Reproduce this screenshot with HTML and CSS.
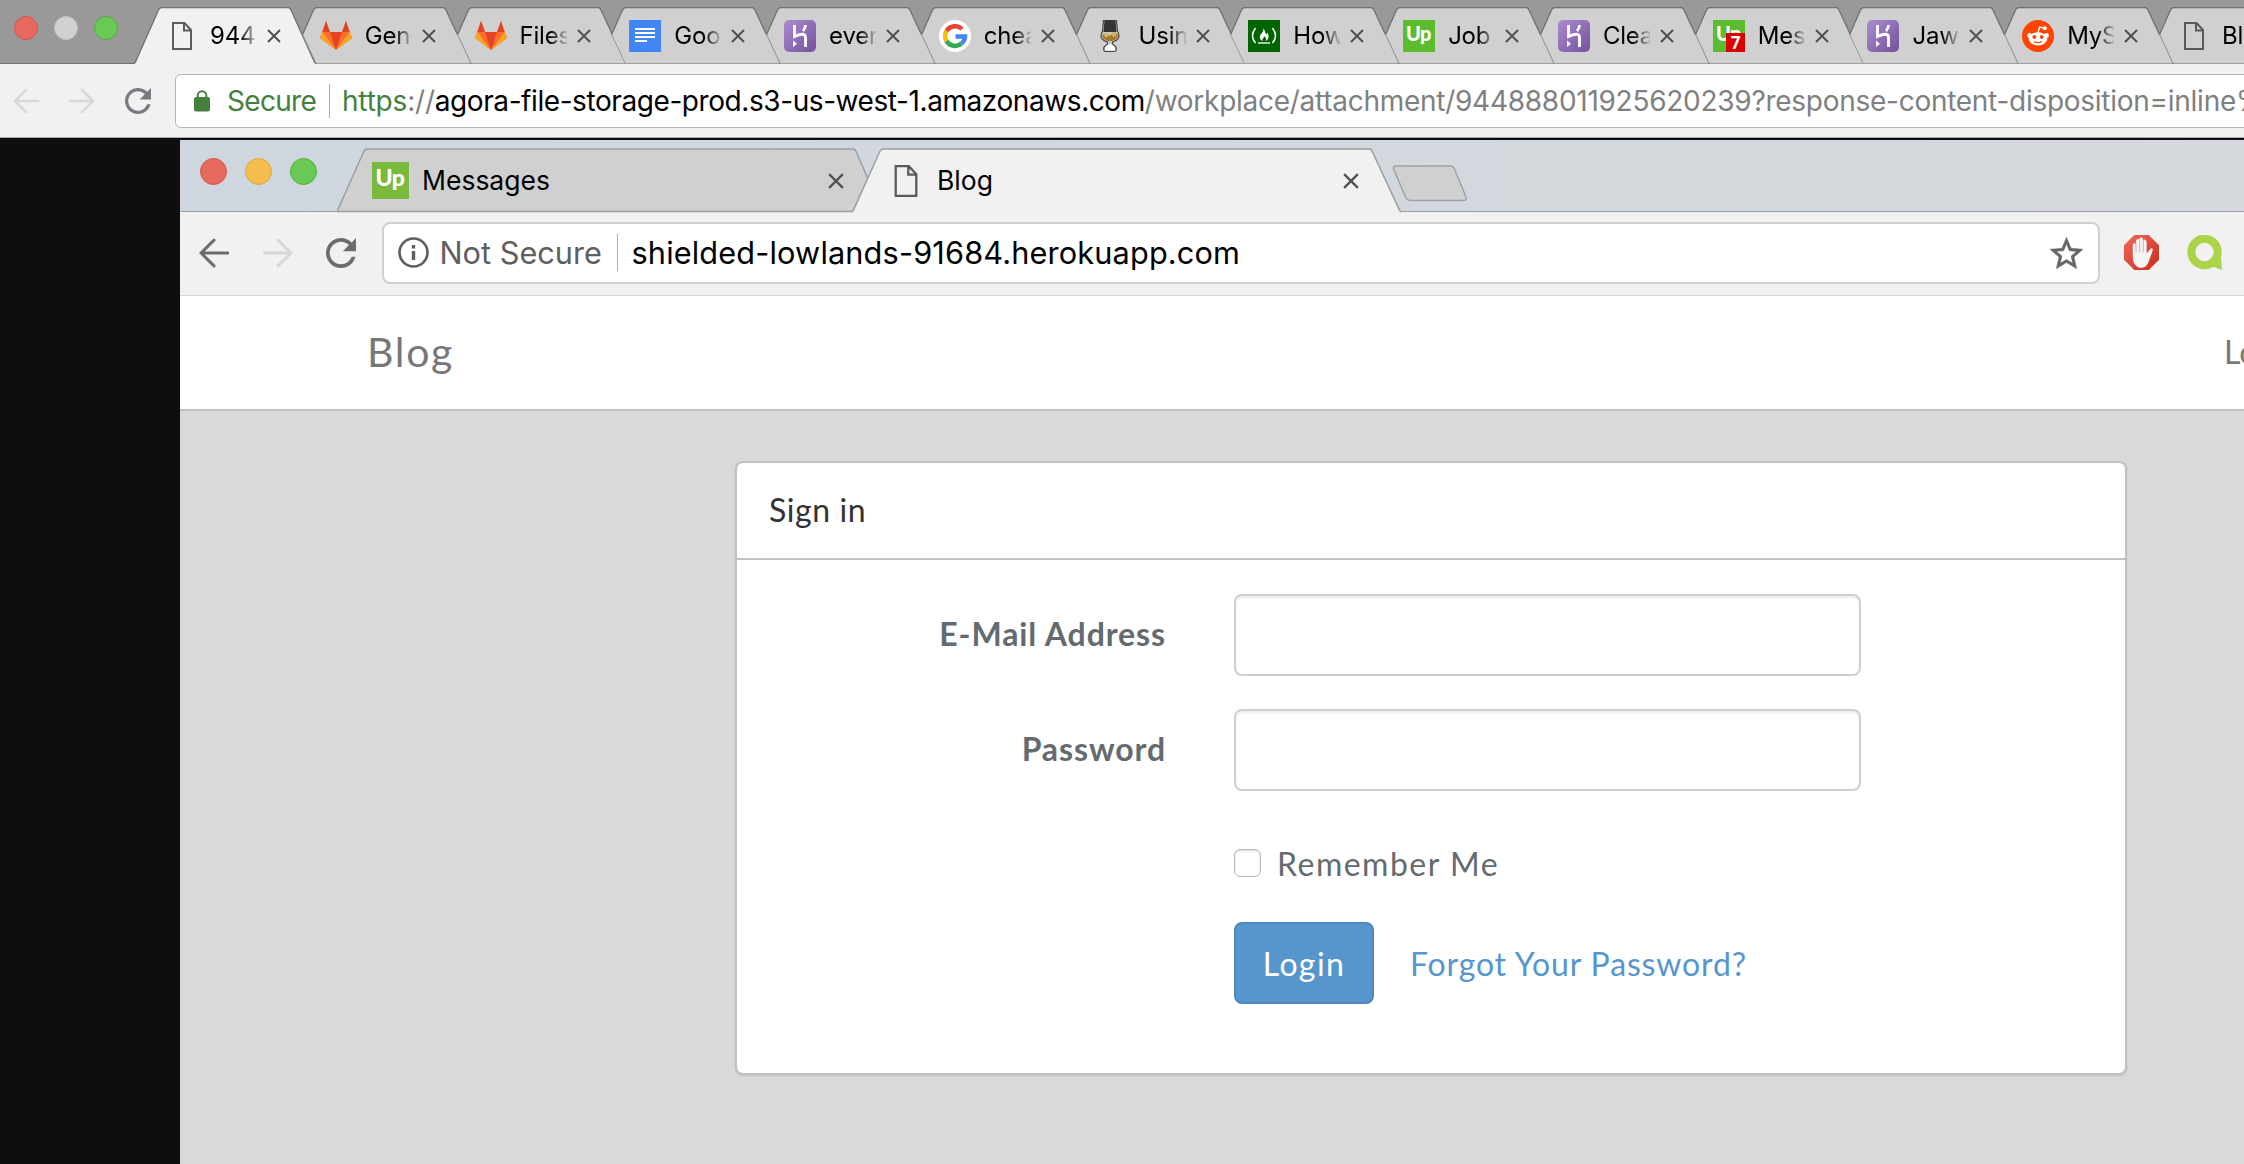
FILE: index.html
```
<!DOCTYPE html>
<html lang="en">
<head>
    <meta charset="UTF-8">
    <meta name="viewport" content="width=device-width, initial-scale=1.0">
    <title>Blog</title>
    <link rel="stylesheet" href="styles.css">
</head>
<body>
    <!-- shared icons -->
    <svg class="sprite">
        <defs>
            <linearGradient id="purple" x1="0" y1="0" x2="1" y2="1">
                <stop offset="0" stop-color="#ab8cd0"/>
                <stop offset="1" stop-color="#75519c"/>
            </linearGradient>
            <linearGradient id="red" x1="0" y1="0" x2="1" y2="1">
                <stop offset="0" stop-color="#ee6a5e"/>
                <stop offset="1" stop-color="#cc2b18"/>
            </linearGradient>
        </defs>
        <symbol id="i-tab" viewBox="0 0 182 57">
            <path d="M27.2 56.5L13.6 27.5L24.5 3Q25.5 .5 28 .5H154Q156 .5 157 3L181.5 56.5z" fill="#d0d0d0"/>
            <path d="M13.6 27.5L27 56" fill="none" stroke="#999" stroke-width="1"/>
            <path d="M13.6 27.5L24.5 3Q25.5 .5 28 .5H154Q156 .5 157 3L168.4 27.5" fill="none" stroke="#707070" stroke-width="1.3"/>
        </symbol>
        <symbol id="i-page" viewBox="0 0 20 28">
            <path d="M1 1H12.5L19 8V27H1z M12 1.5V8.5H18.5" fill="none" stroke="#5a5a5a" stroke-width="2"/>
        </symbol>
        <symbol id="i-close" viewBox="0 0 14 14">
            <path d="M1 1L13 13M13 1L1 13" stroke="#505050" stroke-width="2"/>
        </symbol>
        <symbol id="i-gitlab" viewBox="0 0 32 32">
            <path d="M0 18L6 1L10 12H22L26 1L32 18L16 30z" fill="#fc6d26"/>
            <path d="M6 1L2.5 12H10zM26 1L22 12H29.5zM10 12H22L16 30z" fill="#e24329"/>
            <path d="M2.5 12L0 18L16 30zM29.5 12L32 18L16 30z" fill="#fca326"/>
        </symbol>
        <symbol id="i-docs" viewBox="0 0 32 32">
            <rect width="32" height="32" rx="1" fill="#4285f4"/>
            <path d="M6 9H26M6 13H26M6 17H26M6 21H18" stroke="#fff" stroke-width="2"/>
        </symbol>
        <symbol id="i-heroku" viewBox="0 0 32 32">
            <rect width="32" height="32" rx="5" fill="url(#purple)"/>
            <path d="M10.5 5V16.500Q21.500 11.500 21.500 17.500V27M21.500 5Q21.500 8 19 11" fill="none" stroke="#fff" stroke-width="2.800"/>
            <path d="M9 20.5L13 23.7L9 27z" fill="#fff"/>
        </symbol>
        <symbol id="i-google" viewBox="0 0 32 32">
            <circle cx="16" cy="16" r="16" fill="#fff"/>
            <g fill="none" stroke-width="4.5">
                <path d="M7.5 11A10 10 0 0 1 23 9" stroke="#ea4335"/>
                <path d="M7.5 21A10 10 0 0 1 7.5 11" stroke="#fbbc05"/>
                <path d="M22.5 23.6A10 10 0 0 1 7.5 21" stroke="#34a853"/>
                <path d="M16.5 16.5H26A10 10 0 0 1 22.5 23.6" stroke="#4285f4"/>
            </g>
        </symbol>
        <symbol id="i-glass" viewBox="0 0 32 32">
            <path d="M9.500 .5H22.500L23.500 11Q28 19 18.500 22V24L22 27Q23 31.500 20 31.500H12Q9 31.500 10 27L13.500 24V22Q4 19 8.500 11z" fill="#c8c8c8" stroke="#444" stroke-width="1.200"/>
            <path d="M10.500 .5H21.500L22.500 12H9.500z" fill="#333"/>
            <path d="M8.500 14Q12 15.500 14 14L16 16L19 13Q21 13 23.500 14Q25 18.500 18 21H14Q7 18.500 8.500 14z" fill="#a57a28"/>
            <circle cx="12.500" cy="15" r="2.200" fill="#dcb75c"/>
            <circle cx="20" cy="14.500" r="2.400" fill="#d9b050"/>
            <path d="M14 24.500H18L21 27.500V30.500H11V27.500z" fill="#fff"/>
        </symbol>
        <symbol id="i-fcc" viewBox="0 0 32 32">
            <rect width="32" height="32" fill="#006400"/>
            <path d="M7.5 8Q1.5 16 7.5 23M24.5 8Q30.5 16 24.5 23" fill="none" stroke="#fff" stroke-width="1.5"/>
            <path d="M10 23H22" stroke="#fff" stroke-width="1.3"/>
            <path d="M15 8.5C18 11 16.5 13 18.5 14.5L19 12.5C22 16 20.5 20 17.5 21C19 18.5 17 17.5 16.5 16C16 18 13.5 19 15 21C10.5 19.5 11.5 15.5 13.5 13.5C15 12 15.5 10.5 15 8.5z" fill="#fff"/>
        </symbol>
        <symbol id="i-up" viewBox="0 0 32 32">
            <rect width="32" height="32" fill="currentColor"/>
            <text x="15.5" y="21" text-anchor="middle" class="up-text">Up</text>
        </symbol>
        <symbol id="i-up7" viewBox="0 0 32 32">
            <rect width="32" height="32" fill="currentColor"/>
            <text x="15.5" y="21" text-anchor="middle" class="up-text">Up</text>
            <rect x="13" y="13" width="19" height="19" fill="#d90000"/>
            <text x="22.5" y="29" text-anchor="middle" class="count-text">7</text>
        </symbol>
        <symbol id="i-reddit" viewBox="0 0 32 32">
            <circle cx="16" cy="16" r="16" fill="#ff4500"/>
            <path d="M16 13L17.5 7L22 8" fill="none" stroke="#fff" stroke-width="1.3"/>
            <g fill="#fff">
                <circle cx="22.8" cy="8.3" r="2"/>
                <circle cx="7.5" cy="15.5" r="2.4"/>
                <circle cx="24.5" cy="15.5" r="2.4"/>
                <ellipse cx="16" cy="18.8" rx="9.3" ry="6.6"/>
            </g>
            <circle cx="12.3" cy="17" r="1.9" fill="#ff4500"/>
            <circle cx="19.7" cy="17" r="1.9" fill="#ff4500"/>
            <path d="M12 21.5Q16 24 20 21.5" fill="none" stroke="#ff4500" stroke-width="1.2"/>
        </symbol>
        <symbol id="i-back" viewBox="0 0 28 28">
            <path d="M27 14H3M14 2L2 14L14 26" fill="none" stroke="currentColor" stroke-width="2.8" stroke-linecap="round"/>
        </symbol>
        <symbol id="i-forward" viewBox="0 0 28 28">
            <path d="M1 14H25M14 2L26 14L14 26" fill="none" stroke="currentColor" stroke-width="2.8" stroke-linecap="round"/>
        </symbol>
        <symbol id="i-reload" viewBox="4 4 16 16">
            <path d="M17.65 6.35C16.2 4.9 14.21 4 12 4c-4.42 0-7.99 3.58-7.99 8s3.57 8 7.99 8c3.73 0 6.84-2.55 7.73-6h-2.08c-.82 2.33-3.04 4-5.65 4-3.31 0-6-2.69-6-6s2.69-6 6-6c1.66 0 3.14.69 4.22 1.78L13 11h7V4l-2.35 2.35z" fill="currentColor"/>
        </symbol>
    </svg>

    <div class="tabstrip">
        <div class="lights"><i class="red"></i><i class="grey"></i><i class="green"></i></div>
        <div class="tabs">
            <div class="tab active">
                <svg class="shape" viewBox="0 0 182 57"><path d="M0 57L1.5 55.5L24.5 3Q25.5 .5 28 .5H154Q156 .5 157 3L180.5 55.5L182 57z" fill="#f1f1f1"/><path d="M0 56.5L1.5 55L24.5 3Q25.5 .5 28 .5H154Q156 .5 157 3L180.5 55L182 56.5" fill="none" stroke="#707070" stroke-width="1.3"/></svg>
                <svg class="fav page-icon"><use href="#i-page"/></svg><span class="title">9448</span><svg class="close"><use href="#i-close"/></svg>
            </div>
            <div class="tab"><svg class="shape"><use href="#i-tab"/></svg><svg class="fav"><use href="#i-gitlab"/></svg><span class="title">Gene</span><svg class="close"><use href="#i-close"/></svg></div>
            <div class="tab"><svg class="shape"><use href="#i-tab"/></svg><svg class="fav"><use href="#i-gitlab"/></svg><span class="title">Files</span><svg class="close"><use href="#i-close"/></svg></div>
            <div class="tab"><svg class="shape"><use href="#i-tab"/></svg><svg class="fav"><use href="#i-docs"/></svg><span class="title">Goog</span><svg class="close"><use href="#i-close"/></svg></div>
            <div class="tab"><svg class="shape"><use href="#i-tab"/></svg><svg class="fav"><use href="#i-heroku"/></svg><span class="title">even</span><svg class="close"><use href="#i-close"/></svg></div>
            <div class="tab"><svg class="shape"><use href="#i-tab"/></svg><svg class="fav"><use href="#i-google"/></svg><span class="title">chea</span><svg class="close"><use href="#i-close"/></svg></div>
            <div class="tab"><svg class="shape"><use href="#i-tab"/></svg><svg class="fav"><use href="#i-glass"/></svg><span class="title">Usin</span><svg class="close"><use href="#i-close"/></svg></div>
            <div class="tab"><svg class="shape"><use href="#i-tab"/></svg><svg class="fav"><use href="#i-fcc"/></svg><span class="title">How</span><svg class="close"><use href="#i-close"/></svg></div>
            <div class="tab"><svg class="shape"><use href="#i-tab"/></svg><svg class="fav"><use href="#i-up"/></svg><span class="title">Job</span><svg class="close"><use href="#i-close"/></svg></div>
            <div class="tab"><svg class="shape"><use href="#i-tab"/></svg><svg class="fav"><use href="#i-heroku"/></svg><span class="title">Clea</span><svg class="close"><use href="#i-close"/></svg></div>
            <div class="tab"><svg class="shape"><use href="#i-tab"/></svg><svg class="fav"><use href="#i-up7"/></svg><span class="title">Mes</span><svg class="close"><use href="#i-close"/></svg></div>
            <div class="tab"><svg class="shape"><use href="#i-tab"/></svg><svg class="fav"><use href="#i-heroku"/></svg><span class="title">Jaws</span><svg class="close"><use href="#i-close"/></svg></div>
            <div class="tab"><svg class="shape"><use href="#i-tab"/></svg><svg class="fav"><use href="#i-reddit"/></svg><span class="title">MyS</span><svg class="close"><use href="#i-close"/></svg></div>
            <div class="tab"><svg class="shape"><use href="#i-tab"/></svg><svg class="fav page-icon"><use href="#i-page"/></svg><span class="title">Blog</span></div>
        </div>
    </div>

    <div class="toolbar">
        <svg class="nav off"><use href="#i-back"/></svg>
        <svg class="nav off"><use href="#i-forward"/></svg>
        <svg class="nav"><use href="#i-reload"/></svg>
        <div class="omnibox">
            <svg class="lock" viewBox="0 0 16 22"><rect y="7" width="16" height="14.5" rx="2" fill="#437f3d"/><path d="M3.7 8V5.5a4.3 4.3 0 0 1 8.6 0V8" fill="none" stroke="#437f3d" stroke-width="2"/></svg>
            <span class="secure">Secure</span>
            <span class="url"><span class="scheme">https</span>://<span class="host">agora-file-storage-prod.s3-us-west-1.amazonaws.com</span><span class="path">/workplace/attachment/944888011925620239?response-content-disposition=inline%</span></span>
        </div>
    </div>

    <div class="viewer">
        <div class="window">
            <div class="win-tabstrip">
                <div class="win-lights"><i class="red"></i><i class="yellow"></i><i class="green"></i></div>
                <div class="win-tab">
                    <svg class="win-shape" viewBox="0 0 547 65"><path d="M0 63.5L27 3Q28 1 31 1H516Q518 1 519 3L531 31L516 63.5z" fill="#d0d0d0" stroke="#9a9fa4" stroke-width="1.5"/></svg>
                    <svg class="win-fav"><use href="#i-up"/></svg>
                    <span class="win-title">Messages</span>
                    <svg class="win-close"><use href="#i-close"/></svg>
                </div>
                <div class="win-tab current">
                    <svg class="win-shape" viewBox="0 0 549 65"><path d="M0 65L1.5 62L28 3Q29 1 32 1H517Q519 1 520 3L547.5 62L549 65z" fill="#f1f1f1"/><path d="M0 64L1.5 62L28 3Q29 1 32 1H517Q519 1 520 3L547.5 62L549 64" fill="none" stroke="#9a9fa4" stroke-width="1.5"/></svg>
                    <svg class="win-page"><use href="#i-page"/></svg>
                    <span class="win-title">Blog</span>
                    <svg class="win-close"><use href="#i-close"/></svg>
                </div>
                <svg class="new-tab" viewBox="0 0 76 37"><path d="M4 1H58Q61 1 62 3L74 32Q75 35 72 35.5H18Q15 35 14 33L1.5 4Q1 1 4 1z" fill="#d0d0d0" stroke="#a0a3a8" stroke-width="1.5"/></svg>
            </div>
            <div class="win-toolbar">
                <svg class="win-nav"><use href="#i-back"/></svg>
                <svg class="win-nav off"><use href="#i-forward"/></svg>
                <svg class="win-nav"><use href="#i-reload"/></svg>
                <div class="win-omnibox">
                    <svg class="info" viewBox="0 0 31 31"><circle cx="15.5" cy="15.5" r="14" fill="none" stroke="#5f5f5f" stroke-width="2.6"/><path d="M15.5 14V23M15.5 8V11.5" stroke="#5f5f5f" stroke-width="3.4"/></svg>
                    <span class="insecure">Not Secure</span>
                    <span class="win-url">shielded-lowlands-91684.herokuapp.com</span>
                    <svg class="star" viewBox="2 2 20 19"><path d="M22 9.24l-7.19-.62L12 2 9.19 8.63 2 9.24l5.46 4.73L5.82 21 12 17.27 18.18 21l-1.63-7.03L22 9.24zM12 15.4l-3.76 2.27 1-4.28-3.32-2.88 4.38-.38L12 6.1l1.71 4.04 4.38.38-3.32 2.88 1 4.28L12 15.4z" fill="#666" stroke="#666" stroke-width=".3"/></svg>
                </div>
                <svg class="ext" viewBox="0 0 34 34"><path d="M10 0H24L34 10V24L24 34H10L0 24V10z" fill="url(#red)"/><path d="M8.5 21V9Q10 7 11.5 9V6Q13 2.5 15 5V3.5Q17 .5 18.5 4V5.5Q20.5 3 22 6.5V18L26 13Q28 12.5 28 14.5L24 26Q22 32 16 32Q8.5 31 8.5 21z" fill="#f4f4f4"/><path d="M11.7 8V17M15.2 5V17M18.7 5V17" stroke="#d9b0ac" stroke-width="1"/></svg>
                <svg class="ext" viewBox="0 0 34 34"><circle cx="17" cy="16.5" r="12.8" fill="none" stroke="#acd44a" stroke-width="7.8"/><path d="M33 21L34 34L21 29z" fill="#acd44a"/></svg>
            </div>

            <div class="page">
                <nav class="navbar">
                    <a class="brand">Blog</a>
                    <a class="nav-link">Login</a>
                </nav>
                <div class="panel">
                    <div class="panel-heading">Sign in</div>
                    <form class="panel-body">
                        <label class="label" for="email">E-Mail Address</label>
                        <input class="field" id="email" type="email">
                        <label class="label" for="password">Password</label>
                        <input class="field" id="password" type="password">
                        <label class="remember"><input class="check" type="checkbox"><span>Remember Me</span></label>
                        <div class="actions">
                            <button class="login" type="button">Login</button>
                            <a class="forgot">Forgot Your Password?</a>
                        </div>
                    </form>
                </div>
            </div>
        </div>
    </div>
</body>
</html>
```
FILE: styles.css
```
* {
    box-sizing: border-box;
}
body {
    margin: 0;
    width: 2244px;
    height: 1164px;
    overflow: hidden;
    background: #0e0e0e;
    font-family: Inter, Roboto, sans-serif;
    color: #000;
}
svg {
    display: block;
    flex: none;
}
.sprite {
    position: absolute;
    width: 0;
    height: 0;
}
.up-text {
    font: 900 20px Lato, sans-serif;
    letter-spacing: -0.5px;
    fill: #fff;
}
.count-text {
    font: bold 17px "Open Sans", sans-serif;
    fill: #fff;
}

/* outer browser */
.tabstrip {
    display: flex;
    height: 64px;
    background: #999;
    border-bottom: 1px solid #707070;
}
.lights {
    display: flex;
    gap: 16px;
    width: 134px;
    flex: none;
    padding: 16px 0 0 14px;
}
.lights i,
.win-lights i {
    width: 24px;
    height: 24px;
    border-radius: 50%;
    border-width: 1px;
    border-style: solid;
}
.red { background: #e8695e; border-color: #d2564c; }
.grey { background: #d1d1d1; border-color: #c2c2c2; }
.yellow { background: #f3be4f; border-color: #dba63c; }
.green { background: #68c955; border-color: #52ae40; }
.tabs {
    display: flex;
    height: 64px;
    padding-top: 7px;
}
.tab {
    position: relative;
    display: flex;
    align-items: center;
    flex: none;
    width: 154.77px;
    height: 57px;
    padding: 0 0 0 31px;
}
.shape {
    position: absolute;
    left: 0;
    top: 0;
    width: 182px;
    height: 57px;
}
.fav {
    position: relative;
    width: 32px;
    height: 32px;
    color: #5bbc2e;
}
.fav.page-icon {
    width: 20px;
    height: 28px;
    margin: 0 5px 0 7px;
}
.title {
    position: relative;
    width: 47px;
    margin: 0 10px 0 13px;
    overflow: hidden;
    white-space: nowrap;
    font-size: 24px;
    letter-spacing: -0.2px;
    -webkit-mask-image: linear-gradient(to right, #000 30px, transparent 49px);
    mask-image: linear-gradient(to right, #000 30px, transparent 49px);
}
.close {
    position: relative;
    width: 14px;
    height: 14px;
}
.toolbar {
    display: flex;
    align-items: center;
    height: 74px;
    padding: 0 0 0 12px;
    background: #f1f1f1;
    border-bottom: 1px solid #aaa;
}
.nav {
    width: 28px;
    height: 26px;
    margin: 0 28px 0 0;
    color: #777a80;
}
.nav.off,
.win-nav.off {
    color: #d8d8d8;
}
.omnibox {
    display: flex;
    align-items: center;
    flex: none;
    width: 2100px;
    height: 54px;
    margin-left: -5px;
    padding-left: 18px;
    background: #fff;
    border: 1px solid #b5b5b5;
    border-radius: 6px;
    font-size: 28px;
    white-space: nowrap;
}
.lock {
    width: 16px;
    height: 22px;
}
.secure {
    width: 103px;
    margin: 0 12px 0 17px;
    color: #437f3d;
    border-right: 1px solid #aaa;
    letter-spacing: -0.7px;
}
.url {
    color: #808080;
    letter-spacing: -0.2px;
}
.scheme { color: #437f3d; }
.host {
    color: #000;
    letter-spacing: -0.42px;
}
.path { letter-spacing: -0.27px; }

/* inner browser window */
.viewer {
    padding: 2px 0 0 180px;
}
.window {
    height: 1024px;
    background: #d9d9d9;
}
.win-tabstrip {
    display: flex;
    height: 72px;
    padding-top: 8px;
    background: linear-gradient(to right, #cfd6de, #d5d9dd);
    border-bottom: 1px solid #9a9fa4;
}
.win-lights {
    display: flex;
    gap: 18px;
    flex: none;
    width: 157px;
    padding: 10px 0 0 20px;
}
.win-lights i {
    width: 27px;
    height: 27px;
}
.win-tab {
    position: relative;
    display: flex;
    align-items: center;
    flex: none;
    width: 515px;
    height: 64px;
    padding: 1px 0 0 35px;
}
.win-tab.current {
    width: 541px;
    padding-left: 42px;
}
.win-shape {
    position: absolute;
    left: 0;
    top: 0;
    width: 547px;
    height: 65px;
}
.current .win-shape {
    width: 549px;
}
.win-fav {
    position: relative;
    width: 37px;
    height: 37px;
    color: #78b93e;
}
.win-page {
    position: relative;
    width: 24px;
    height: 32px;
}
.win-title {
    position: relative;
    width: 406px;
    margin: 0 0 1px 13px;
    font-size: 26.5px;
    letter-spacing: 0;
}
.current .win-title {
    margin-left: 19px;
}
.win-close {
    position: relative;
    width: 16px;
    height: 16px;
}
.new-tab {
    width: 76px;
    height: 37px;
    margin: 17px 0 0 -1px;
}
.win-toolbar {
    display: flex;
    align-items: center;
    height: 84px;
    padding: 0 0 2px 19px;
    background: #f1f1f1;
    border-bottom: 1px solid #d6d6d6;
}
.win-nav {
    width: 30px;
    height: 30px;
    margin-right: 33.5px;
    color: #6c6c6c;
}
.win-omnibox {
    display: flex;
    align-items: center;
    flex: none;
    width: 1718px;
    height: 62px;
    margin: 0 24px 0 -8px;
    padding: 0 15px 0 14px;
    background: #fff;
    border: 2px solid #d0d0d0;
    border-radius: 8px;
    font-size: 30.7px;
    white-space: nowrap;
}
.info {
    width: 31px;
    height: 31px;
}
.insecure {
    width: 178px;
    margin: 0 14px 0 11px;
    border-right: 1px solid #b0b0b0;
    color: #5f5f5f;
    letter-spacing: 0;
}
.win-url {
    flex: 1;
    letter-spacing: 0.15px;
}
.star {
    width: 33px;
    height: 32px;
}
.ext {
    width: 35px;
    height: 35px;
    margin-right: 28px;
}

/* page */
.page {
    font-family: Lato, sans-serif;
    font-size: 32px;
    color: #636b6f;
}
.navbar {
    display: flex;
    align-items: center;
    justify-content: space-between;
    height: 115px;
    padding: 0 0 3px 187px;
    background: #fff;
    border-bottom: 2px solid #c0c0c0;
    color: #777;
}
.brand {
    font-size: 41px;
    letter-spacing: 1.7px;
}
.nav-link {
    width: 20px;
    white-space: nowrap;
}
.panel {
    width: 1392px;
    height: 614px;
    margin: 50px 0 0 555px;
    background: #fff;
    border: 2px solid #c0c0c0;
    border-radius: 8px;
    box-shadow: 0 1px 2px rgba(0, 0, 0, 0.1);
}
.panel-heading {
    height: 97px;
    padding: 0 32px;
    line-height: 94px;
    letter-spacing: 0.6px;
    color: #333;
    border-bottom: 2px solid #c0c0c0;
}
.panel-body {
    display: grid;
    grid-template-columns: 429px 627px;
    grid-template-rows: 82px 82px 65px 82px;
    column-gap: 68px;
    row-gap: 33px;
    padding-top: 34px;
}
.label {
    line-height: 80px;
    text-align: right;
    font-weight: bold;
    letter-spacing: 0.9px;
}
.field {
    width: 627px;
    height: 82px;
    border: 2px solid #ccd0d2;
    border-radius: 8px;
    box-shadow: inset 0 2px 2px rgba(0, 0, 0, 0.075);
}
.remember {
    grid-column: 2;
    display: flex;
    align-items: center;
    height: 28px;
    margin-top: 25px;
    letter-spacing: 1.5px;
}
.check {
    appearance: none;
    width: 27px;
    height: 28px;
    margin: 0 16px 0 0;
    border: 1.5px solid #b9b9b9;
    border-radius: 6px;
    box-shadow: inset 0 1px 2px rgba(0, 0, 0, 0.15);
}
.actions {
    grid-column: 2;
    display: flex;
    align-items: center;
}
.login {
    width: 140px;
    height: 82px;
    padding: 0;
    background: #5796cd;
    border: 2px solid #4a88bf;
    border-radius: 8px;
    font: inherit;
    letter-spacing: 1.4px;
    color: #fff;
}
.forgot {
    margin-left: 36px;
    letter-spacing: 0.85px;
    color: #5796cd;
}
```
